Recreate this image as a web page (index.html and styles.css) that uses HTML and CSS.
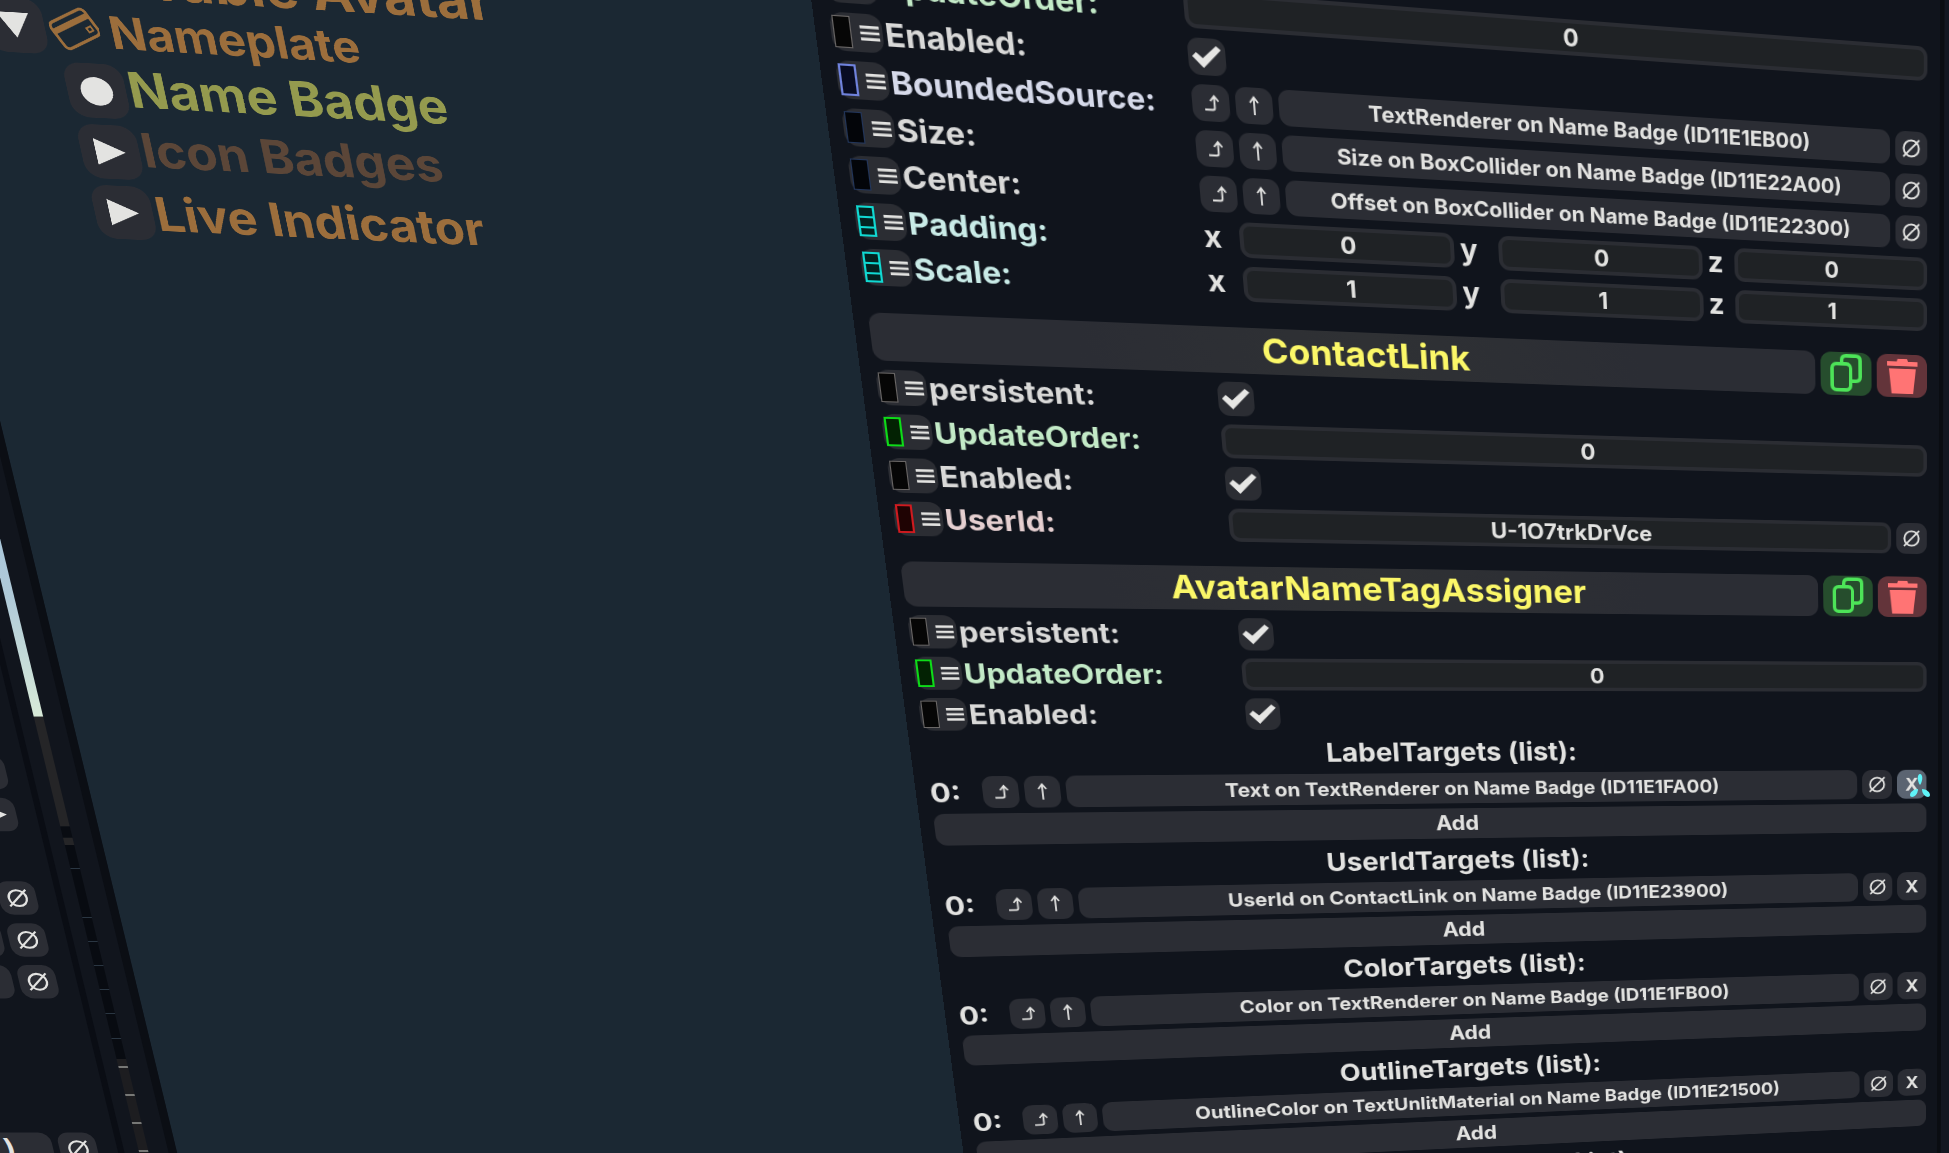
FILE: index.html
```html
<!DOCTYPE html>
<html lang="en">
<head>
<meta charset="utf-8">
<title>Inspector</title>
<meta name="viewport" content="width=device-width, initial-scale=1">
<link rel="stylesheet" href="styles.css">
</head>
<body>
<svg class="symbols" aria-hidden="true">
  <symbol id="i-jump" viewBox="0 0 36 36"><path d="M12 24.500h7.500q2 0 2-2V11.500M17.500 16l4-5 4 5" fill="none" stroke="currentColor" stroke-width="1.800"/></symbol>
  <symbol id="i-up" viewBox="0 0 36 36"><path d="M18 27V10M14 15l4-5.500 4 5.500" fill="none" stroke="currentColor" stroke-width="1.800"/></symbol>
  <symbol id="i-null" viewBox="0 0 36 36"><circle cx="18" cy="18" r="8.500" fill="none" stroke="currentColor" stroke-width="2.200"/><path d="M9 27l18-18" stroke="currentColor" stroke-width="2"/></symbol>
  <symbol id="i-menu" viewBox="0 0 20 20"><path d="M1 4h18M1 10h18M1 16h18" stroke="currentColor" stroke-width="2.800"/></symbol>
  <symbol id="i-copy" viewBox="0 0 58 48"><path d="M24 12V9q0-5 5-5h11q5 0 5 5v18q0 5-5 5h-4" fill="none" stroke="currentColor" stroke-width="4"/><rect x="13" y="13" width="21" height="29" rx="5" fill="none" stroke="currentColor" stroke-width="4"/></symbol>
  <symbol id="i-trash" viewBox="0 0 58 48"><path d="M12 8h11l1-3h11l1 3h11v5H12zM14 16h31l-3 28H17z" fill="currentColor"/></symbol>
  <symbol id="i-card" viewBox="0 0 40 40"><g transform="rotate(-28 20 20)" fill="none" stroke="currentColor" stroke-width="2.500"><rect x="3" y="8" width="34" height="25" rx="4"/><path d="M3 15.500h34" stroke-width="5"/><rect x="29" y="24" width="4" height="4" stroke-width="1.500"/></g></symbol>
</svg>

<main class="scene">

  <nav class="tree" aria-label="Hierarchy">
    <div class="node depth-0"><button class="toggle" aria-label="Collapse"><span class="tri-down"></span></button><svg class="node-icon"><use href="#i-card"/></svg><span class="node-name">Wearable Avatar</span></div>
    <div class="node depth-1"><button class="toggle" aria-label="Collapse"><span class="tri-down"></span></button><svg class="node-icon"><use href="#i-card"/></svg><span class="node-name">Nameplate</span></div>
    <div class="node depth-2 selected"><button class="toggle" aria-label="No children"><span class="dot"></span></button><span class="node-name">Name Badge</span></div>
    <div class="node depth-2 inactive"><button class="toggle" aria-label="Expand"><span class="tri-right"></span></button><span class="node-name">Icon Badges</span></div>
    <div class="node depth-2"><button class="toggle" aria-label="Expand"><span class="tri-right"></span></button><span class="node-name">Live Indicator</span></div>
  </nav>

  <aside class="side" aria-label="Secondary inspector">
    <div class="side-rows">
      <div class="line"><button class="btn wide" aria-label="Option"></button></div>
      <div class="line"><button class="btn wide" aria-label="Pick"><span class="diamond"></span></button></div>
      <div class="line"></div>
      <div class="line"><button class="btn" aria-label="Set null"><svg><use href="#i-null"/></svg></button></div>
      <div class="line"><button class="btn ref" aria-label="Reference"></button><button class="btn" aria-label="Set null"><svg><use href="#i-null"/></svg></button></div>
      <div class="line"><button class="btn ref" aria-label="Reference"></button><button class="btn" aria-label="Set null"><svg><use href="#i-null"/></svg></button></div>
      <div class="line"></div>
      <div class="line"></div>
      <div class="line"></div>
      <div class="line"><button class="btn ref tail">)</button><button class="btn" aria-label="Set null"><svg><use href="#i-null"/></svg></button></div>
    </div>
    <div class="meter">
      <span class="seg lit"></span><span class="seg dim"></span><span class="seg gap"></span><span class="seg chip"></span><span class="seg ticks"></span><span class="seg tail-ticks"></span>
    </div>
  </aside>

  <section class="panel" aria-label="Inspector">
    <div class="content">

      <div class="component">
        <div class="row green"><div class="name"><button class="port" aria-label="UpdateOrder port"><i class="swatch"></i><svg><use href="#i-menu"/></svg></button><label for="b-order">UpdateOrder:</label></div><div class="editor"><input class="text" id="b-order" value="0"></div></div>
        <div class="row"><div class="name"><button class="port" aria-label="Enabled port"><i class="swatch"></i><svg><use href="#i-menu"/></svg></button><label for="b-enabled">Enabled:</label></div><div class="editor"><input type="checkbox" class="check" id="b-enabled" checked></div></div>
        <div class="row violet"><div class="name"><button class="port" aria-label="BoundedSource port"><i class="swatch"></i><svg><use href="#i-menu"/></svg></button><label for="b-source">BoundedSource:</label></div><div class="editor"><button class="btn" aria-label="Open"><svg><use href="#i-jump"/></svg></button><button class="btn" aria-label="Up"><svg><use href="#i-up"/></svg></button><button class="btn ref" id="b-source">TextRenderer on Name Badge (ID11E1EB00)</button><button class="btn" aria-label="Set null"><svg><use href="#i-null"/></svg></button></div></div>
        <div class="row navy"><div class="name"><button class="port" aria-label="Size port"><i class="swatch"></i><svg><use href="#i-menu"/></svg></button><label for="b-size">Size:</label></div><div class="editor"><button class="btn" aria-label="Open"><svg><use href="#i-jump"/></svg></button><button class="btn" aria-label="Up"><svg><use href="#i-up"/></svg></button><button class="btn ref" id="b-size">Size on BoxCollider on Name Badge (ID11E22A00)</button><button class="btn" aria-label="Set null"><svg><use href="#i-null"/></svg></button></div></div>
        <div class="row navy"><div class="name"><button class="port" aria-label="Center port"><i class="swatch"></i><svg><use href="#i-menu"/></svg></button><label for="b-center">Center:</label></div><div class="editor"><button class="btn" aria-label="Open"><svg><use href="#i-jump"/></svg></button><button class="btn" aria-label="Up"><svg><use href="#i-up"/></svg></button><button class="btn ref" id="b-center">Offset on BoxCollider on Name Badge (ID11E22300)</button><button class="btn" aria-label="Set null"><svg><use href="#i-null"/></svg></button></div></div>
        <div class="row cyan"><div class="name"><button class="port" aria-label="Padding port"><i class="swatch"></i><svg><use href="#i-menu"/></svg></button><span>Padding:</span></div><div class="editor vector"><label for="p-x">x</label><input class="text" id="p-x" value="0"><label for="p-y">y</label><input class="text" id="p-y" value="0"><label for="p-z">z</label><input class="text" id="p-z" value="0"></div></div>
        <div class="row cyan"><div class="name"><button class="port" aria-label="Scale port"><i class="swatch"></i><svg><use href="#i-menu"/></svg></button><span>Scale:</span></div><div class="editor vector"><label for="s-x">x</label><input class="text" id="s-x" value="1"><label for="s-y">y</label><input class="text" id="s-y" value="1"><label for="s-z">z</label><input class="text" id="s-z" value="1"></div></div>
      </div>

      <div class="component">
        <header class="title"><h2>ContactLink</h2><button class="copy" aria-label="Duplicate"><svg><use href="#i-copy"/></svg></button><button class="trash" aria-label="Delete"><svg><use href="#i-trash"/></svg></button></header>
        <div class="row"><div class="name"><button class="port" aria-label="persistent port"><i class="swatch"></i><svg><use href="#i-menu"/></svg></button><label for="c-persist">persistent:</label></div><div class="editor"><input type="checkbox" class="check" id="c-persist" checked></div></div>
        <div class="row green"><div class="name"><button class="port" aria-label="UpdateOrder port"><i class="swatch"></i><svg><use href="#i-menu"/></svg></button><label for="c-order">UpdateOrder:</label></div><div class="editor"><input class="text" id="c-order" value="0"></div></div>
        <div class="row"><div class="name"><button class="port" aria-label="Enabled port"><i class="swatch"></i><svg><use href="#i-menu"/></svg></button><label for="c-enabled">Enabled:</label></div><div class="editor"><input type="checkbox" class="check" id="c-enabled" checked></div></div>
        <div class="row red"><div class="name"><button class="port" aria-label="UserId port"><i class="swatch"></i><svg><use href="#i-menu"/></svg></button><label for="c-user">UserId:</label></div><div class="editor"><input class="text" id="c-user" value="U-1O7trkDrVce"><button class="btn" aria-label="Set null"><svg><use href="#i-null"/></svg></button></div></div>
      </div>

      <div class="component">
        <header class="title"><h2>AvatarNameTagAssigner</h2><button class="copy" aria-label="Duplicate"><svg><use href="#i-copy"/></svg></button><button class="trash" aria-label="Delete"><svg><use href="#i-trash"/></svg></button></header>
        <div class="row"><div class="name"><button class="port" aria-label="persistent port"><i class="swatch"></i><svg><use href="#i-menu"/></svg></button><label for="a-persist">persistent:</label></div><div class="editor"><input type="checkbox" class="check" id="a-persist" checked></div></div>
        <div class="row green"><div class="name"><button class="port" aria-label="UpdateOrder port"><i class="swatch"></i><svg><use href="#i-menu"/></svg></button><label for="a-order">UpdateOrder:</label></div><div class="editor"><input class="text" id="a-order" value="0"></div></div>
        <div class="row"><div class="name"><button class="port" aria-label="Enabled port"><i class="swatch"></i><svg><use href="#i-menu"/></svg></button><label for="a-enabled">Enabled:</label></div><div class="editor"><input type="checkbox" class="check" id="a-enabled" checked></div></div>

        <div class="list">
          <h3>LabelTargets (list):</h3>
          <div class="item"><span class="index">0:</span><button class="btn" aria-label="Open"><svg><use href="#i-jump"/></svg></button><button class="btn" aria-label="Up"><svg><use href="#i-up"/></svg></button><button class="btn ref">Text on TextRenderer on Name Badge (ID11E1FA00)</button><button class="btn" aria-label="Set null"><svg><use href="#i-null"/></svg></button><button class="btn hovered">X</button></div>
          <button class="btn add">Add</button>
        </div>
        <div class="list">
          <h3>UserIdTargets (list):</h3>
          <div class="item"><span class="index">0:</span><button class="btn" aria-label="Open"><svg><use href="#i-jump"/></svg></button><button class="btn" aria-label="Up"><svg><use href="#i-up"/></svg></button><button class="btn ref">UserId on ContactLink on Name Badge (ID11E23900)</button><button class="btn" aria-label="Set null"><svg><use href="#i-null"/></svg></button><button class="btn">X</button></div>
          <button class="btn add">Add</button>
        </div>
        <div class="list">
          <h3>ColorTargets (list):</h3>
          <div class="item"><span class="index">0:</span><button class="btn" aria-label="Open"><svg><use href="#i-jump"/></svg></button><button class="btn" aria-label="Up"><svg><use href="#i-up"/></svg></button><button class="btn ref">Color on TextRenderer on Name Badge (ID11E1FB00)</button><button class="btn" aria-label="Set null"><svg><use href="#i-null"/></svg></button><button class="btn">X</button></div>
          <button class="btn add">Add</button>
        </div>
        <div class="list">
          <h3>OutlineTargets (list):</h3>
          <div class="item"><span class="index">0:</span><button class="btn" aria-label="Open"><svg><use href="#i-jump"/></svg></button><button class="btn" aria-label="Up"><svg><use href="#i-up"/></svg></button><button class="btn ref">OutlineColor on TextUnlitMaterial on Name Badge (ID11E21500)</button><button class="btn" aria-label="Set null"><svg><use href="#i-null"/></svg></button><button class="btn">X</button></div>
          <button class="btn add">Add</button>
        </div>
        <div class="list">
          <h3>BackgroundTargets (list):</h3>
        </div>
      </div>
    </div>
  </section>

  <svg class="cursor" viewBox="0 0 22 25" aria-hidden="true"><g fill="#5ff3f8"><path d="M11 12C8 8 8 1 11 1s3 7 0 11z"/><path d="M9 16c-4 0-8 3-8 6 0 4 8 2 8-6z"/><path d="M13 16c4 0 8 3 8 6 0 4-8 2-8-6z"/></g></svg>
</main>
</body>
</html>
```
FILE: styles.css
```css
* { box-sizing: border-box; }

body {
  margin: 0;
  background: #1b2833;
  color: #e2e2e0;
  font-family: Inter, "Noto Sans", sans-serif;
  font-weight: 700;
}

button, input { font: inherit; color: inherit; margin: 0; padding: 0; border: 0; }
h2, h3 { margin: 0; font-weight: 700; }
.symbols { position: absolute; width: 0; height: 0; }

/* A 3D space: each window in it is a flat plane seen at an angle. */
.scene {
  position: relative;
  height: 100vh;
  overflow: hidden;
}

/* ---------- hierarchy plane ---------- */
.tree {
  position: absolute;
  left: 0;
  top: 0;
  display: flex;
  flex-direction: column;
  gap: 6px;
  margin: -108px 0 0 -110px;
  transform-origin: 110px 108px;
  transform: matrix3d(1.243, 0.0742, 0, 0.00008, 0.2645, 1.1546, 0, 0.0001, 0, 0, 1, 0, 61, 61.7, 0, 1);
  color: #9c6e3c;
  font-size: 42px;
  line-height: 48px;
  white-space: nowrap;
}
.node { display: flex; align-items: center; gap: 2px; height: 48px; }
.depth-0 .node-name { font-size: 47px; padding-top: 16px; }
.depth-1 { padding-left: 55px; }
.depth-1 .node-name { font-size: 39px; padding-top: 4px; }
.depth-2 { padding-left: 110px; }
.selected { color: #949a4e; font-size: 43px; }
.selected .node-name { padding-bottom: 6px; }
.inactive { color: #5b4638; }
.inactive .node-name { padding-bottom: 6px; }
.toggle {
  display: grid;
  place-items: center;
  width: 48px;
  height: 48px;
  border-radius: 14px;
  background: #2b2d34;
}
.node-icon { width: 40px; height: 40px; margin: 0 6px 0 2px; }
.dot { width: 26px; height: 25px; border-radius: 50%; background: #e3e3e1; }
.tri-right { width: 25px; height: 24px; background: #e3e3e1; clip-path: polygon(0 0, 100% 50%, 0 100%); }
.tri-down { width: 26px; height: 22px; background: #e3e3e1; clip-path: polygon(0 0, 100% 0, 50% 100%); }

/* ---------- secondary plane ---------- */
.side {
  position: absolute;
  right: 100%;
  top: 421px;
  display: flex;
  width: 400px;
  height: 820px;
  background: #11151d;
  border-right: 8px solid #0b0e14;
  transform-origin: 100% 0;
  transform: matrix(1.05, 0, 0.225, 0.93, 0, 0);
}
.side-rows {
  flex: 1;
  display: flex;
  flex-direction: column;
  gap: 9px;
  padding: 360px 19px 0 0;
  border-right: 6px solid #0a0d14;
}
.line { display: flex; justify-content: flex-end; gap: 6px; height: 36px; }
.line .wide { display: flex; justify-content: flex-end; align-items: center; width: 80px; padding-right: 9px; }
.diamond { width: 24px; height: 14px; background: #e3e3e1; clip-path: polygon(0 0, 40% 0, 100% 50%, 40% 100%, 0 100%, 45% 50%); }
.line .tail { padding-right: 36px; text-align: right; font-size: 28px; }
.meter { width: 42px; padding-left: 14px; display: flex; flex-direction: column; }
.seg { width: 9px; }
.lit { height: 318px; background: linear-gradient(#9fbfdc, #b0cad8 60%, #d8ead8); }
.dim { height: 118px; background: #252527; }
.gap { height: 12px; background: #090c12; }
.chip { height: 8px; background: #252527; }
.ticks { height: 230px; background: repeating-linear-gradient(#080b11 0 25px, #2a3642 25px 26px); }
.tail-ticks { flex: 1; background: repeating-linear-gradient(#1d1d20 0 8px, #777876 8px 10px, #1d1d20 10px 30px); }

/* ---------- inspector plane ---------- */
.panel {
  position: absolute;
  left: -14px;
  top: -60px;
  background: #131721;
  padding-right: 40px;
  transform-origin: 14px 60px;
  transform: matrix3d(1.236072, 0.082747, 0, 0.000116639, 0.249817, 1.091935, 0, 0.00013037, 0, 0, 1, 0, 822.12, -37.756, 0, 1);
}
.content {
  display: flex;
  flex-direction: column;
  gap: 27px;
  width: 1126px;
  padding: 60px 14px;
  background: #10141c;
  border-right: 5px solid #0a0d12;
}
.component { display: flex; flex-direction: column; gap: 9px; }

.row { display: grid; grid-template-columns: minmax(0, 3fr) minmax(0, 7fr); height: 36px; }
.name {
  display: flex;
  align-items: center;
  gap: 2px;
  color: #d9d9d8;
  font-size: 30px;
  line-height: 34px;
  white-space: nowrap;
}
.port {
  display: flex;
  align-items: center;
  justify-content: space-between;
  width: 46px;
  height: 36px;
  padding: 0 2px;
  border-radius: 12px;
  background: #2b2d33;
  color: #e2e2e0;
}
.port svg { width: 19px; height: 20px; }
.swatch { width: 16px; height: 30px; background: #060606; border: 1px solid #6b6867; }

.green .name { color: #c3eac7; }
.green .swatch { background: #032203; border: 2px solid #0ddc18; }
.violet .name { color: #d6daea; }
.violet .swatch { background: #080c22; border: 2px solid #6f82dc; }
.navy .swatch { background: #030509; border-color: #22365c; }
.cyan .name { color: #c9ebe7; }
.cyan .swatch { background: repeating-linear-gradient(#04211f 0 8px, #10d9d2 8px 10px); border: 2px solid #10d9d2; }
.red .name { color: #e5cfd0; }
.red .swatch { background: #1f0303; border: 2px solid #cf1a1f; }

.editor { display: flex; gap: 6px; }
.btn {
  flex: none;
  display: grid;
  place-items: center;
  width: 36px;
  height: 36px;
  border-radius: 11px;
  background: #2b2d34;
  font-size: 22px;
  line-height: 36px;
  white-space: nowrap;
}
.btn svg { width: 36px; height: 36px; }
.ref { flex: 1; display: block; width: auto; }
.hovered { background: #5b6471; }

.text {
  flex: 1;
  min-width: 0;
  height: 36px;
  border: 4px solid #2b2d33;
  border-radius: 11px;
  background: #1f2225;
  text-align: center;
  font-size: 24px;
}
.check {
  appearance: none;
  display: grid;
  place-items: center;
  width: 36px;
  height: 36px;
  border-radius: 11px;
  background: #2b2d33;
}
.check:checked::before {
  content: "";
  width: 28px;
  height: 22px;
  background: #e6e6e4;
  clip-path: polygon(0 50%, 14% 32%, 36% 57%, 84% 0, 100% 17%, 37% 100%);
}

.vector { gap: 0; }
.vector label { width: 35px; font-size: 30px; line-height: 32px; }
.vector label:nth-of-type(2) { width: 46px; padding-left: 6px; }
.vector label:nth-of-type(3) { padding-left: 6px; }

.title { display: flex; gap: 6px; height: 48px; }
.title h2 {
  flex: 1;
  border-radius: 12px;
  background: linear-gradient(90deg, #2b2d34 20%, #2f3134 50%, #2b2d34 80%);
  color: #fbf768;
  font-size: 36px;
  line-height: 46px;
  text-align: center;
}
.title button { width: 58px; height: 48px; border-radius: 12px; }
.title svg { display: block; width: 58px; height: 48px; }
.copy { background: #264d2d; color: #4de458; }
.trash { background: #63343a; color: #ff7474; }

.list { display: flex; flex-direction: column; gap: 6px; }
.list h3 { height: 36px; font-size: 30px; line-height: 34px; text-align: center; }
.item { display: flex; gap: 6px; }
.index { width: 46px; font-size: 30px; line-height: 36px; }
.add { display: block; width: 100%; font-size: 24px; }

/* ---------- pointer ---------- */
.cursor { position: absolute; left: 1909px; top: 773px; width: 22px; height: 25px; }
```
